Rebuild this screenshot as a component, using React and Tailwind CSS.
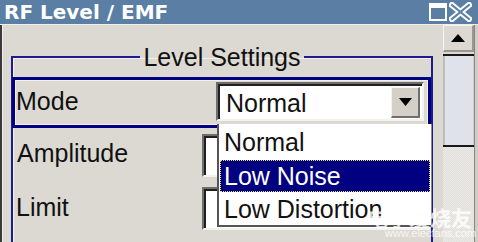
import React from "react";

const Sunken = ({ className = "", children }) => (
  <div
    className={`border-2 border-t-[#6e6e6e] border-l-[#6e6e6e] border-b-[#f4f2ee] border-r-[#f4f2ee] ${className}`}
  >
    <div className="h-full w-full border-t-2 border-l-2 border-t-[#202020] border-l-[#202020] bg-white">
      {children}
    </div>
  </div>
);

const TitleButtons = () => (
  <div className="ml-auto flex items-center gap-[2px]">
    <div className="w-[18px] h-[18px] border-2 border-t-[5px] border-white" />
    <svg width="23" height="20" viewBox="0 0 23 20">
      <path d="M3 3 L20 17 M20 3 L3 17" stroke="#ffffff" strokeWidth="6" strokeLinecap="square" />
      <path d="M3 3 L20 17 M20 3 L3 17" stroke="#5b7fa4" strokeWidth="2" strokeLinecap="square" />
    </svg>
  </div>
);

const Scrollbar = () => (
  <div className="w-[31px] flex flex-col">
    <div className="h-[27px] bg-[#dcd9d2] border-t border-l border-[#f6f4f0] border-r-2 border-b-2 border-r-[#9a9791] border-b-[#9a9791] flex items-center justify-center">
      <svg width="14" height="8" viewBox="0 0 14 8">
        <path d="M7 0 L14 8 L0 8 Z" fill="#000" />
      </svg>
    </div>
    <div className="h-[2px] bg-[#dcd9d2]" />
    <div className="h-[2px] bg-[#1a1a1a]" />
    <div className="h-[89px] bg-[#dfe2ea] border-l-2 border-[#bcbcbc] border-r border-r-[#cfcfcf]" />
    <div className="h-[2px] bg-[#1a1a1a]" />
    <div
      className="flex-1 bg-[#e6e4e0]"
      style={{
        backgroundImage:
          "repeating-conic-gradient(#e2e0dc 0% 25%, #ebe9e5 0% 50%)",
        backgroundSize: "2px 2px",
      }}
    />
  </div>
);

export default function App() {
  const sans = { fontFamily: '"Liberation Sans", Arial, sans-serif' };

  return (
    <div
      className="relative w-[478px] h-[242px] overflow-hidden bg-[#dcd9d2] flex flex-col"
      style={sans}
    >
      {/* title bar */}
      <div className="h-[27px] bg-[#5b7fa4] flex items-center pl-[4px] pr-[6px]">
        <span
          className="text-white font-bold text-[20px] leading-[24px]"
          style={{ fontFamily: '"DejaVu Sans", Verdana, sans-serif' }}
        >
          RF Level / EMF
        </span>
        <TitleButtons />
      </div>

      <div className="flex flex-1 border-t border-[#f2efe9]">
        <div className="w-[3px] border-l-2 border-[#3a3a3a] border-r border-r-[#f2efe9]" />

        <div className="relative w-[440px]">
          <fieldset className="ml-[8px] mt-[18px] w-[422px] border-2 border-[#1c1c8e] p-0 h-[400px] shadow-[inset_1px_1px_0_#f4f1ea]">
            <legend className="mx-auto px-[3px] text-[25px] leading-[28px] text-[#111]">
              Level Settings
            </legend>

            <div className="mt-[6px] -ml-[1px] h-[51px] border-[3px] border-[#000080]">
              <div className="h-full w-full border border-[#f4f1ea] flex items-start">
                <span className="pt-[6px] w-[200px] text-[25px] leading-[28px] text-[#111]">Mode</span>
                <Sunken className="mt-[1px] w-[208px] h-[39px]">
                  <div className="flex h-full items-center">
                    <span className="pl-[6px] text-[25px] leading-[28px] text-[#111]">Normal</span>
                    <div className="ml-auto mr-[2px] h-[31px] w-[29px] bg-[#d4d0c8] border-t border-l border-[#f4f2ee] border-r-2 border-b-2 border-r-[#6e6e6e] border-b-[#6e6e6e] flex items-center justify-center">
                      <svg width="13" height="8" viewBox="0 0 13 8">
                        <path d="M0 0 L13 0 L6.5 8 Z" fill="#000" />
                      </svg>
                    </div>
                  </div>
                </Sunken>
              </div>
            </div>

            <div className="h-[53px] flex items-start">
              <span className="pl-[4px] pt-[11px] w-[189px] text-[25px] leading-[28px] text-[#111]">Amplitude</span>
              <Sunken className="mt-[6px] w-[228px] h-[43px]" />
            </div>
            <div className="h-[54px] flex items-start">
              <span className="pl-[3px] pt-[12px] w-[189px] text-[25px] leading-[28px] text-[#111]">Limit</span>
              <Sunken className="mt-[6px] w-[228px] h-[43px]" />
            </div>
          </fieldset>

          {/* open dropdown list */}
          <div className="absolute left-[214px] top-[99px] w-[215px] bg-white border-l-2 border-b-2 border-r border-[#555] border-r-[#8a8a8a] flex flex-col pt-[1px]">
            <div className="h-[33px] flex items-center pl-[5px] text-[25px] leading-[28px] text-[#111]">Normal</div>
            <div className="mt-[2px] h-[32px] mx-[1px] bg-[#000080] border border-dotted border-[#e8e070] flex items-center pl-[3px] text-[25px] leading-[28px] text-white">
              Low Noise
            </div>
            <div className="h-[33px] flex items-center pl-[5px] text-[25px] leading-[28px] text-[#111]">Low Distortion</div>
          </div>
        </div>

        <Scrollbar />
        <div className="w-[4px] border-l border-[#8a8780] bg-[#d0cdc6]" />
      </div>

      {/* watermark */}
      <div
        className="absolute left-[367px] top-[206px] text-white/80 text-[21px] font-bold leading-[22px] whitespace-nowrap"
        style={{ fontFamily: '"Noto Sans CJK SC", sans-serif' }}
      >
        电子发烧友
      </div>
      <div className="absolute left-[385px] top-[228px] text-white/80 text-[11px] leading-[11px] whitespace-nowrap">
        www.elecfans.com
      </div>
    </div>
  );
}
